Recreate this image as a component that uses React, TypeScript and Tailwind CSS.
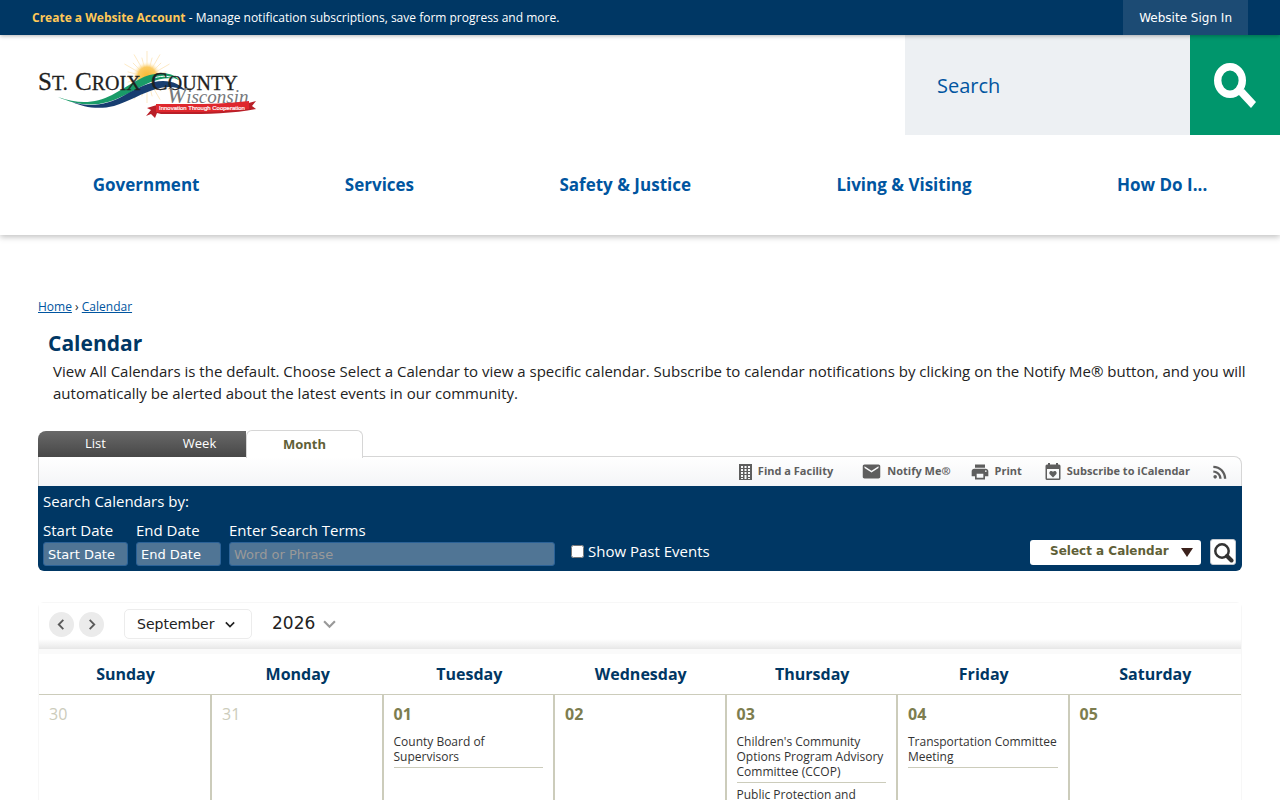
import type { ReactNode } from "react";
import { MdEmail, MdPrint, MdRssFeed } from "react-icons/md";

const NAV_ITEMS = [
  "Government",
  "Services",
  "Safety & Justice",
  "Living & Visiting",
  "How Do I...",
];

const MONTHS = [
  "January",
  "February",
  "March",
  "April",
  "May",
  "June",
  "July",
  "August",
  "September",
  "October",
  "November",
  "December",
];

const WEEKDAYS = [
  "Sunday",
  "Monday",
  "Tuesday",
  "Wednesday",
  "Thursday",
  "Friday",
  "Saturday",
];

type Day = { date: string; outside?: boolean; events: string[] };

const DAYS: Day[] = [
  { date: "30", outside: true, events: [] },
  { date: "31", outside: true, events: [] },
  { date: "01", events: ["County Board of Supervisors"] },
  { date: "02", events: [] },
  {
    date: "03",
    events: [
      "Children's Community Options Program Advisory Committee (CCOP)",
      "Public Protection and",
    ],
  },
  { date: "04", events: ["Transportation Committee Meeting"] },
  { date: "05", events: [] },
];

const RAYS = Array.from({ length: 24 }, (_, i) => {
  const angle = (i * Math.PI) / 12;
  const length = i % 2 ? 20 : 26;
  return {
    x: 109 + Math.cos(angle) * length,
    y: 28 + Math.sin(angle) * length,
  };
});

function Logo() {
  return (
    <svg
      viewBox="0 0 220 70"
      className="h-[70px] w-[220px]"
      role="img"
      aria-label="St. Croix County, Wisconsin"
    >
      <defs>
        <radialGradient id="sun">
          <stop offset="0" stopColor="#f9b934" />
          <stop offset="0.6" stopColor="#fbcb62" />
          <stop offset="1" stopColor="#fff" stopOpacity="0" />
        </radialGradient>
      </defs>
      {RAYS.map((r, i) => (
        <line
          key={i}
          x1="109"
          y1="28"
          x2={r.x}
          y2={r.y}
          stroke="#fae0ac"
          strokeWidth="0.7"
        />
      ))}
      <circle cx="109" cy="27" r="15" fill="url(#sun)" />
      <path
        d="M20 48C42 60 62 60 80 54C97 47 108 40 124 37C134 35 142 37 148 41L147 35C140 27 130 23 116 26C103 30 92 40 76 48C58 56 40 55 20 48Z"
        fill="#fff"
      />
      <path
        d="M20 48C42 56 58 54 74 46C91 37 102 27 117 25C129 23 137 26 141 31C132 28 123 29 113 33C98 39 87 48 70 53C52 58 36 55 20 48Z"
        fill="#199b68"
      />
      <path
        d="M34 53C54 59 70 55 85 47C100 39 112 32 125 32C135 32 143 36 148 42C138 37 128 37 118 40C104 44 92 52 76 57C60 61 45 58 34 53Z"
        fill="#173d70"
      />
      <path
        d="M116 29C125 26 133 27 139 31"
        fill="none"
        stroke="#fff"
        strokeWidth="1"
      />
      <g
        className="font-['Liberation_Serif',serif]"
        fill="#1f1f1f"
        stroke="#1f1f1f"
        strokeWidth="0.3"
      >
        <text x="0" y="41" fontSize="25">
          S<tspan fontSize="20">T.</tspan>
        </text>
        <text x="37" y="41" fontSize="25">
          C<tspan fontSize="20">ROIX</tspan>
        </text>
        <text x="113" y="41" fontSize="25">
          C<tspan fontSize="20">OUNTY</tspan>
        </text>
      </g>
      <text
        x="129"
        y="54"
        fontSize="23"
        fill="#77797c"
        className="font-['Liberation_Serif',serif] italic"
      >
        W<tspan fontSize="19">isconsin</tspan>
      </text>
      <path
        d="M109 59L122 55V62C148 61 184 62 218 52L214 57L218 60C189 66 149 65 123 65L119 64L117 69L113 65L108 67L113 61Z"
        fill="#b91f28"
      />
      <path
        d="M118 55C151 55 181 56 211 52V60C180 64 149 63 118 63Z"
        fill="#df272d"
      />
      <text
        x="121"
        y="61"
        fontSize="6"
        fill="#fff"
        stroke="#fff"
        strokeWidth="0.2"
        className="font-['Liberation_Sans',sans-serif]"
      >
        Innovation Through Cooperation
      </text>
    </svg>
  );
}

function BuildingIcon() {
  return (
    <svg viewBox="0 0 13 16" className="h-4 w-[13px]" fill="currentColor" aria-hidden="true">
      <path
        fillRule="evenodd"
        d="M0 0H13V16H0ZM2 2V4H4V2ZM5.500 2V4H7.500V2ZM9 2V4H11V2ZM2 5V7H4V5ZM5.500 5V7H7.500V5ZM9 5V7H11V5ZM2 8V10H4V8ZM5.500 8V10H7.500V8ZM9 8V10H11V8ZM2 11V13H4V11ZM5.500 11V15H7.500V11ZM9 11V13H11V11ZM2 14V15H4V14ZM9 14V15H11V14Z"
      />
    </svg>
  );
}

function CalendarHeartIcon() {
  return (
    <svg viewBox="0 0 16 18" className="h-[18px] w-4" fill="currentColor" aria-hidden="true">
      <path
        fillRule="evenodd"
        d="M2 1.500H3V0H5V1.500H11V0H13V1.500H14Q15.500 1.500 15.500 3V15.500Q15.500 17 14 17H2Q0.500 17 0.500 15.500V3Q0.500 1.500 2 1.500ZM2 6V15.500H14V6Z"
      />
      <path d="M8 14.500L5 11.500C3 9 6 6.500 8 8.800C10 6.500 13 9 11 11.500Z" />
    </svg>
  );
}

function Chevron({ d, className }: { d: string; className: string }) {
  return (
    <svg viewBox="0 0 12 12" className={className} fill="none" stroke="currentColor" aria-hidden="true">
      <path d={d} strokeWidth="2" />
    </svg>
  );
}

function ToolLink({ icon, children }: { icon: ReactNode; children: ReactNode }) {
  return (
    <a href="#" className="flex items-center gap-1.5">
      {icon}
      {children}
    </a>
  );
}

function Header() {
  return (
    <>
      <div className="relative z-10 flex h-[35px] items-center justify-between bg-[#003764] px-8 text-xs text-white shadow-[0_1px_4px_rgba(0,0,0,0.3)]">
        <p>
          <a href="#" className="font-bold text-[#ffc857]">
            Create a Website Account
          </a>{" "}
          - Manage notification subscriptions, save form progress and more.
        </p>
        <a
          href="#"
          className="flex h-full items-center bg-[#1c4b74] px-4 font-['DejaVu_Sans',sans-serif]"
        >
          Website Sign In
        </a>
      </div>
      <header className="bg-white shadow-[0_2px_6px_rgba(0,0,0,0.25)]">
        <div className="flex h-[100px] justify-between">
          <a href="#" className="ml-[38px] mt-[14px]">
            <Logo />
          </a>
          <form className="flex">
            <input
              type="search"
              aria-label="Search"
              placeholder="Search"
              className="w-[285px] bg-[#edf0f3] px-8 pt-[2px] text-xl text-[#0055a0] placeholder:text-[#0055a0]"
            />
            <button
              type="button"
              aria-label="Search"
              className="flex w-[90px] items-center justify-center bg-[#00966c] text-white"
            >
              <svg viewBox="0 0 42 45" className="h-[45px] w-[42px]" aria-hidden="true">
                <ellipse cx="16" cy="17.500" rx="12.300" ry="13.800" fill="none" stroke="currentColor" strokeWidth="7.400" />
                <path d="M24 31L30 26L42 39L37 45Z" fill="currentColor" />
              </svg>
            </button>
          </form>
        </div>
        <nav className="flex h-[100px] items-center justify-around pl-5 text-[17px] font-bold text-[#0055a0]">
          {NAV_ITEMS.map((item) => (
            <a key={item} href="#">
              {item}
            </a>
          ))}
        </nav>
      </header>
    </>
  );
}

function ViewTabs() {
  return (
    <div className="flex h-[27px] items-end text-[13px]">
      <div className="flex h-[26px] rounded-tl-lg bg-linear-to-b from-[#696969] to-[#484848] text-white">
        <button type="button" className="w-[115px]">
          List
        </button>
        <button type="button" className="w-[93px]">
          Week
        </button>
      </div>
      <button
        type="button"
        className="relative z-10 -mb-px h-7 w-[117px] rounded-t-md border border-b-0 border-[#d6d6d6] bg-white font-bold text-[#5f5f37]"
      >
        Month
      </button>
    </div>
  );
}

function SearchPanel() {
  const field =
    "h-6 rounded-[3px] border border-[#2b6297] bg-[#507595] px-1 font-['DejaVu_Sans',sans-serif] text-[13px] text-white";

  return (
    <form className="rounded-b-md bg-[#003764] px-[5px] pb-[5px] pt-1 text-[15px] leading-[22px] text-white">
      <p>Search Calendars by:</p>
      <div className="mt-[7px] flex items-end">
        <label className="flex w-[85px] flex-col gap-px">
          Start Date
          <input type="text" placeholder="Start Date" className={`${field} placeholder:text-white`} />
        </label>
        <label className="ml-2 flex w-[85px] flex-col gap-px">
          End Date
          <input type="text" placeholder="End Date" className={`${field} placeholder:text-white`} />
        </label>
        <label className="ml-2 flex w-[326px] flex-col gap-px">
          Enter Search Terms
          <input type="text" placeholder="Word or Phrase" className={`${field} placeholder:text-[#999]`} />
        </label>
        <label className="ml-4 flex items-center gap-1 pb-1">
          <input type="checkbox" className="size-[13px]" />
          Show Past Events
        </label>
        <div className="mb-px ml-auto flex items-center">
          <div className="relative">
            <select
              aria-label="Select a Calendar"
              className="block h-[25px] w-[171px] appearance-none rounded-[3px] bg-white pb-[2px] pl-5 font-['DejaVu_Sans',sans-serif] text-xs font-bold text-[#5f5f37]"
            >
              <option>Select a Calendar</option>
            </select>
            <svg
              viewBox="0 0 12 9"
              className="pointer-events-none absolute right-2 top-2 h-[9px] w-3"
              aria-hidden="true"
            >
              <path d="M0 0H12L6 9Z" fill="#3c221c" />
            </svg>
          </div>
          <button
            type="button"
            aria-label="Search calendars"
            className="ml-[9px] mr-px flex size-[26px] items-center justify-center rounded-[3px] border border-[#c3c9d0] bg-white"
          >
            <svg viewBox="0 0 22 22" className="size-[22px] shrink-0" fill="none" stroke="#333" aria-hidden="true">
              <circle cx="10" cy="10" r="6.700" strokeWidth="2.500" />
              <path d="M15 15L19.500 19.500" strokeWidth="4" strokeLinecap="round" />
            </svg>
          </button>
        </div>
      </div>
    </form>
  );
}

function MonthBar() {
  const arrow =
    "flex size-[25px] items-center justify-center rounded-full bg-[#ebebeb] text-[#5a5a5a]";

  return (
    <div className="flex h-[46px] items-center border-b border-[#e8e8e8] bg-linear-to-b from-white from-80% to-[#eaeaea] pb-[3px] pl-[10px] font-['DejaVu_Sans',sans-serif] text-[#222]">
      <button type="button" aria-label="Previous month" className={arrow}>
        <Chevron d="M8 1L3 6L8 11" className="size-[11px]" />
      </button>
      <button type="button" aria-label="Next month" className={`ml-[5px] ${arrow}`}>
        <Chevron d="M4 1L9 6L4 11" className="size-[11px]" />
      </button>
      <div className="relative ml-5">
        <select
          aria-label="Month"
          defaultValue="September"
          className="block h-[30px] w-32 appearance-none rounded-[5px] border border-[#ececec] bg-white px-3 text-sm"
        >
          {MONTHS.map((month) => (
            <option key={month}>{month}</option>
          ))}
        </select>
        <Chevron
          d="M1 4L6 9L11 4"
          className="pointer-events-none absolute right-[17px] top-[10px] size-[10px]"
        />
      </div>
      <div className="relative ml-5">
        <select
          aria-label="Year"
          defaultValue="2026"
          className="block h-[30px] w-[66px] appearance-none text-[17px]"
        >
          <option>2025</option>
          <option>2026</option>
          <option>2027</option>
        </select>
        <Chevron
          d="M1 3L6 8L11 3"
          className="pointer-events-none absolute right-[2px] top-[9px] size-[13px] text-[#999]"
        />
      </div>
    </div>
  );
}

function MonthGrid() {
  return (
    <table className="w-full table-fixed border-separate border-spacing-0">
      <thead>
        <tr>
          {WEEKDAYS.map((name) => (
            <th
              key={name}
              scope="col"
              className="h-[46px] border-b border-t-[5px] border-b-[#ccccbb] border-t-[#fafafa] text-base font-bold text-[#003764] first:w-[173px]"
            >
              {name}
            </th>
          ))}
        </tr>
      </thead>
      <tbody>
        <tr>
          {DAYS.map((day) => (
            <td
              key={day.date}
              className="h-[140px] border-r-2 border-[#ccccbb] px-[10px] pt-[7px] align-top last:border-r-0"
            >
              <div
                className={
                  day.outside
                    ? "text-base text-[#ccccbb]"
                    : "text-base font-bold text-[#7d7d4f]"
                }
              >
                {day.date}
              </div>
              <ul className="mt-1 text-xs leading-[15px] text-[#333]">
                {day.events.map((event) => (
                  <li key={event} className="border-b border-[#ccccbb] pb-[3px] pt-1">
                    <a href="#">{event}</a>
                  </li>
                ))}
              </ul>
            </td>
          ))}
        </tr>
      </tbody>
    </table>
  );
}

export default function App() {
  return (
    <div className="bg-white font-['Open_Sans',sans-serif] text-[#222]">
      <Header />
      <main className="px-[38px] pt-16">
        <nav aria-label="Breadcrumb" className="text-xs">
          <a href="#" className="text-[#0055a0] underline">
            Home
          </a>{" "}
          ›{" "}
          <a href="#" className="text-[#0055a0] underline">
            Calendar
          </a>
        </nav>
        <h1 className="ml-[10px] mt-3 text-[21px] font-bold leading-8 text-[#003764]">
          Calendar
        </h1>
        <p className="-mr-3 ml-[15px] mt-px text-[15px] leading-[22px]">
          View All Calendars is the default. Choose Select a Calendar to view a
          specific calendar. Subscribe to calendar notifications by clicking on
          the Notify Me® button, and you will automatically be alerted about the
          latest events in our community.
        </p>

        <section className="mt-[26px]">
          <ViewTabs />
          <div className="-mt-px flex h-[30px] items-center justify-end rounded-tr-lg border border-b-0 border-[#d6d6d6] bg-linear-to-b from-white to-[#f4f5f7] pr-[11px] text-[11px] font-bold text-[#5e5e5e]">
            <ToolLink icon={<BuildingIcon />}>Find a Facility</ToolLink>
            <div className="ml-[29px]">
              <ToolLink icon={<MdEmail className="-mx-px size-[21px]" />}>Notify Me®</ToolLink>
            </div>
            <div className="ml-5">
              <ToolLink icon={<MdPrint className="-mx-px size-5" />}>Print</ToolLink>
            </div>
            <div className="ml-[23px]">
              <ToolLink icon={<CalendarHeartIcon />}>Subscribe to iCalendar</ToolLink>
            </div>
            <a href="#" aria-label="RSS feed" className="ml-5">
              <MdRssFeed className="size-5" />
            </a>
          </div>
          <SearchPanel />
        </section>

        <section className="mt-[31px] rounded-t-md border border-b-0 border-[#f7f7f7]">
          <MonthBar />
          <MonthGrid />
        </section>
      </main>
    </div>
  );
}
